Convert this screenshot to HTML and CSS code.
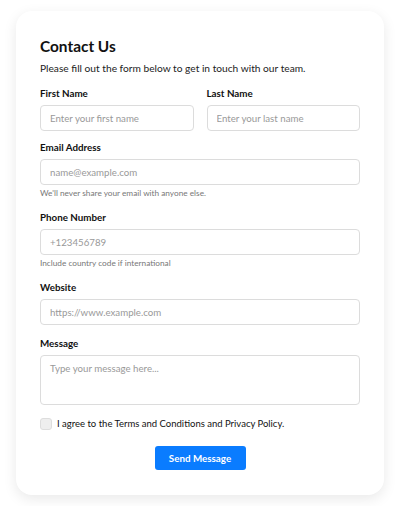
FILE: index.html
```html
<!DOCTYPE html>
<html>
<head>
    <title>Contact Us</title>
    <link rel="stylesheet" href="styles.css">
</head>
<body>
    <div class="card">
        <h1 class="title">Contact Us</h1>
        <p class="intro">Please fill out the form below to get in touch with our team.</p>

        <form class="contact-form">
            <div class="row">
                <div class="field">
                    <label for="firstName">First Name</label>
                    <input type="text" id="firstName" placeholder="Enter your first name">
                </div>
                <div class="field">
                    <label for="lastName">Last Name</label>
                    <input type="text" id="lastName" placeholder="Enter your last name">
                </div>
            </div>

            <div class="field">
                <label for="email">Email Address</label>
                <input type="email" id="email" placeholder="name@example.com">
                <small class="hint">We'll never share your email with anyone else.</small>
            </div>

            <div class="field">
                <label for="phone">Phone Number</label>
                <input type="tel" id="phone" placeholder="+123456789">
                <small class="hint">Include country code if international</small>
            </div>

            <div class="field">
                <label for="website">Website</label>
                <input type="url" id="website" placeholder="https://www.example.com">
            </div>

            <div class="field">
                <label for="message">Message</label>
                <textarea id="message" placeholder="Type your message here..."></textarea>
            </div>

            <label class="agree">
                <input type="checkbox" id="terms">
                <span>I agree to the Terms and Conditions and Privacy Policy.</span>
            </label>

            <div class="actions">
                <button type="submit" class="btn">Send Message</button>
            </div>
        </form>
    </div>
</body>
</html>
```

FILE: styles.css
```css
body {
    font-family: Lato, "Noto Sans", sans-serif;
    background-color: #fff;
    color: #111;
    margin: 0;
    padding: 11px 16px;
}

.card {
    background-color: #fff;
    border-radius: 16px;
    box-shadow: 0 4px 14px rgba(0, 0, 0, 0.09);
    padding: 24px 24px 25px;
}

.title {
    font-size: 15.4px;
    line-height: 22px;
    font-weight: 700;
    margin: 0;
}

.intro {
    font-size: 10.2px;
    line-height: 18px;
    margin: 2px 0 0;
    color: #222;
}

.contact-form {
    margin-top: 8px;
}

.row {
    display: flex;
    gap: 13px;
    margin-bottom: 8px;
}

.row .field {
    flex: 1;
    margin-bottom: 0;
}

.field {
    display: flex;
    flex-direction: column;
    margin-bottom: 10px;
}

.field label {
    font-size: 9.8px;
    line-height: 16px;
    font-weight: 700;
    margin-bottom: 4px;
}

.field input,
.field textarea {
    box-sizing: border-box;
    width: 100%;
    height: 26px;
    padding: 0 9px;
    border: 1px solid #dcdcdc;
    border-radius: 4px;
    font-family: inherit;
    font-size: 9.7px;
    color: #333;
    margin: 0;
}

.field textarea {
    height: 50px;
    padding: 6px 9px;
    resize: none;
}

.field input::placeholder,
.field textarea::placeholder {
    color: #999;
}

.hint {
    font-size: 8.25px;
    line-height: 12px;
    color: #777;
    margin-top: 2px;
}

.agree {
    display: flex;
    align-items: center;
    gap: 5px;
    font-size: 9.5px;
    line-height: 14px;
    margin-top: 12px;
}

.agree input {
    appearance: none;
    width: 12px;
    height: 12px;
    margin: 0;
    border: 1px solid #ddd;
    border-radius: 3px;
    background-color: #eee;
}

.actions {
    display: flex;
    justify-content: center;
    margin-top: 15px;
}

.btn {
    font-family: inherit;
    font-size: 9.8px;
    font-weight: 700;
    color: #fff;
    background-color: #0a7cff;
    border: none;
    border-radius: 3px;
    width: 91px;
    height: 24px;
    cursor: pointer;
}
```
